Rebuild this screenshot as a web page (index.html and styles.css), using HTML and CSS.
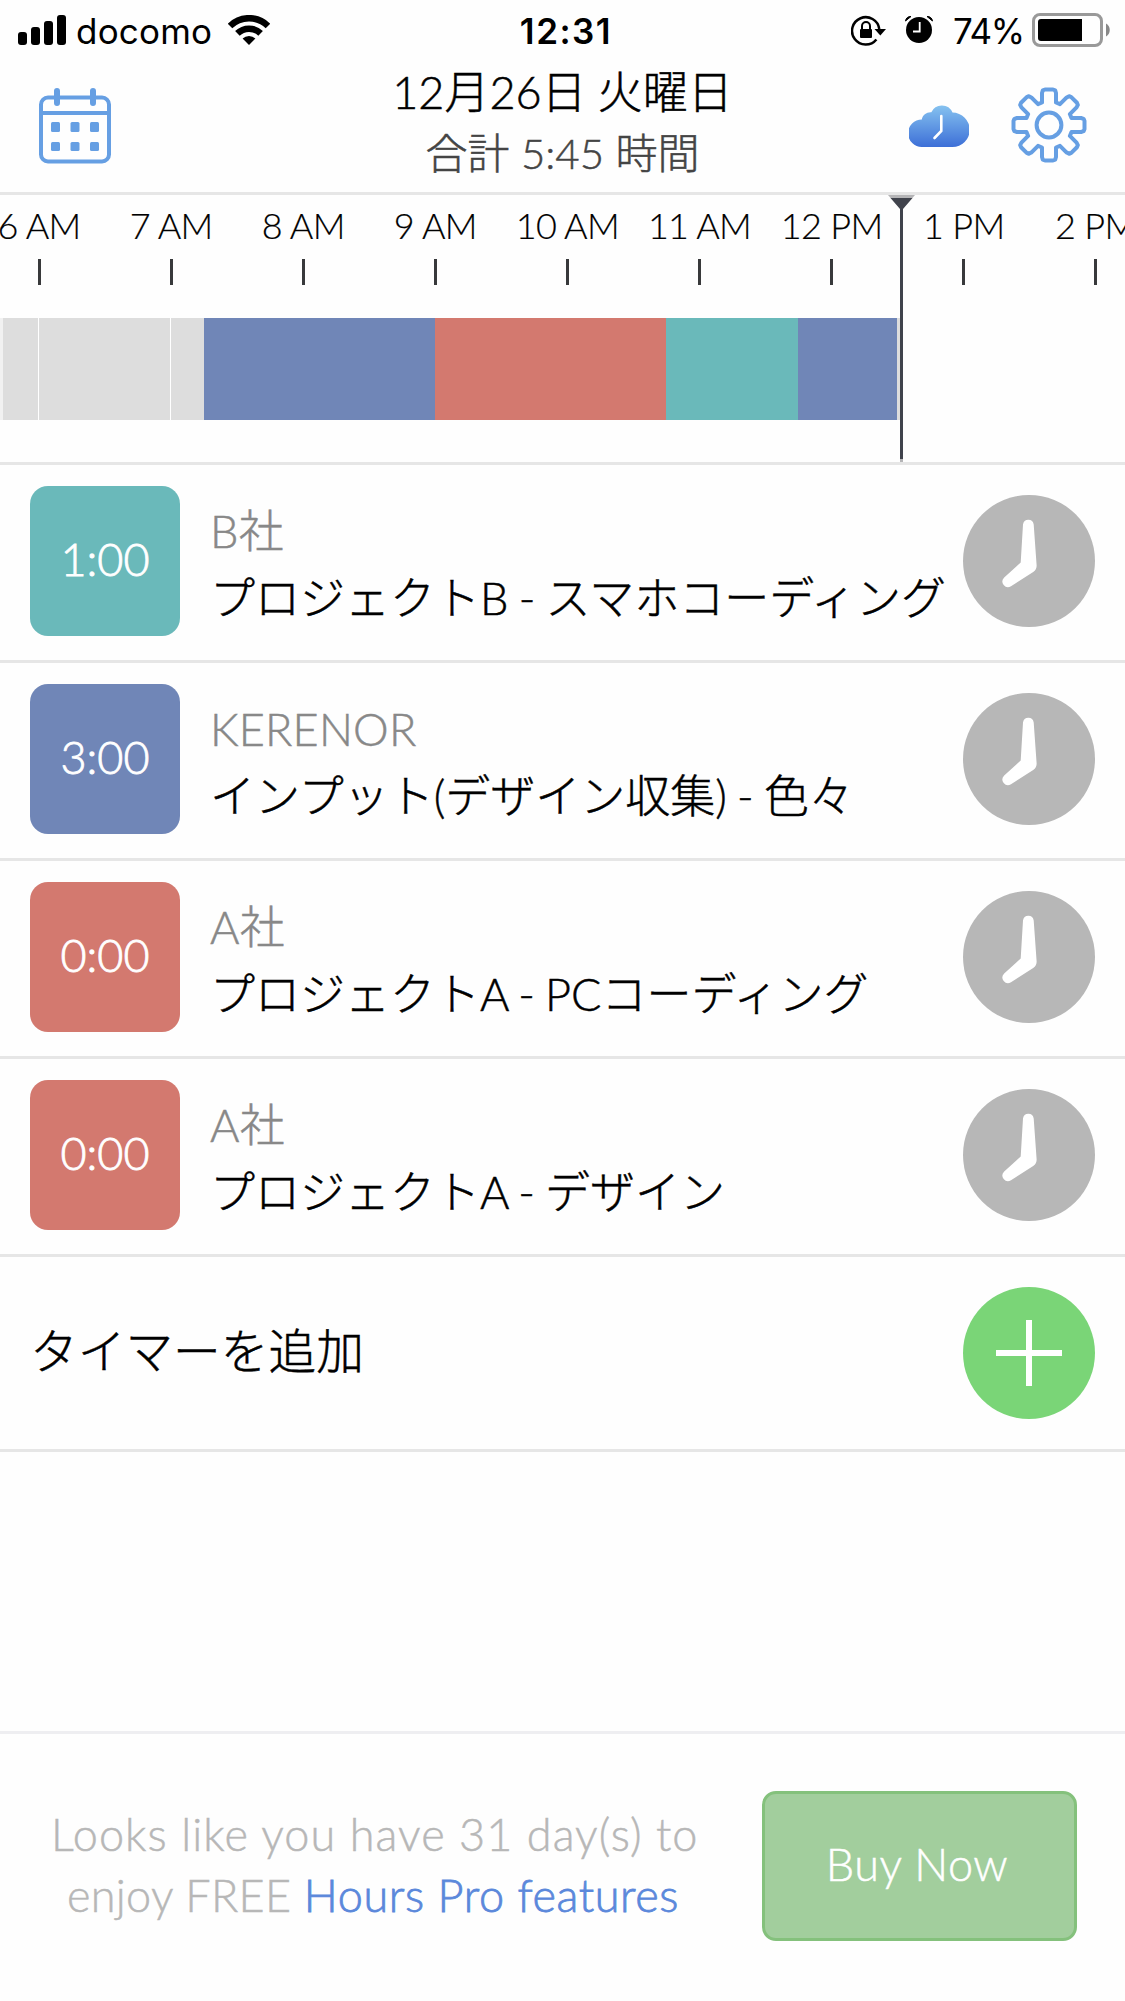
FILE: index.html
```html
<!DOCTYPE html>
<html lang="ja">
<head>
    <meta charset="UTF-8">
    <meta name="viewport" content="width=device-width, initial-scale=1.0">
    <title>Hours</title>
    <link rel="stylesheet" href="styles.css">
</head>
<body>
    <div class="status-bar">
        <div class="status-left">
            <svg class="signal" width="48" height="30" viewBox="0 0 48 30">
                <rect x="0" y="17" width="9" height="13" rx="3"/>
                <rect x="13" y="12" width="9" height="18" rx="3"/>
                <rect x="26" y="6" width="9" height="24" rx="3"/>
                <rect x="39" y="0" width="9" height="30" rx="3"/>
            </svg>
            <span class="carrier">docomo</span>
            <svg class="wifi" width="42" height="30" viewBox="0 0 42 30">
                <path d="M2 11A27 27 0 0 1 40 11" fill="none" stroke="#000" stroke-width="6.5"/>
                <path d="M9.4 18.4A16.5 16.5 0 0 1 32.6 18.4" fill="none" stroke="#000" stroke-width="6.5"/>
                <path d="M21 30L14.6 23.6A9 9 0 0 1 27.4 23.6Z"/>
            </svg>
        </div>
        <span class="clock">12:31</span>
        <div class="status-right">
            <svg class="lock" width="36" height="32" viewBox="0 0 36 32">
                <path d="M28.3 14A13.7 13.7 0 1 0 25.4 24.5" fill="none" stroke="#000" stroke-width="2.5"/>
                <path d="M23.5 14H35L29.3 20.5Z"/>
                <rect x="9" y="14" width="12" height="9" rx="1"/>
                <path d="M11 15V11a4 4 0 0 1 8 0V15" fill="none" stroke="#000" stroke-width="2"/>
            </svg>
            <svg class="alarm" width="28" height="28" viewBox="0 0 28 28">
                <circle cx="14" cy="15" r="13"/>
                <path d="M0.5 6A5 5 0 0 1 6 1.500ZM27.500 6A5 5 0 0 0 22 1.500Z" stroke="#000" stroke-width="1"/>
                <path d="M14.700 7V16.500H8" fill="none" stroke="#fff" stroke-width="1.800"/>
            </svg>
            <span class="percent">74%</span>
            <svg class="battery" width="78" height="34" viewBox="0 0 78 34">
                <rect x="1.500" y="1.500" width="68" height="31" rx="6.500" fill="none" stroke="#999" stroke-width="3"/>
                <path d="M9 6H50V28H9a3 3 0 0 1-3-3V9a3 3 0 0 1 3-3Z"/>
                <path d="M74 10.500C79 13 79 21 74 23.500Z" fill="#888"/>
            </svg>
        </div>
    </div>

    <div class="header">
        <svg class="calendar" width="72" height="76" viewBox="0 0 72 76" fill="none" stroke="#669fe3">
            <rect x="2" y="9.500" width="68" height="64" rx="7" stroke-width="4"/>
            <path d="M2 25H70" stroke-width="4"/>
            <path d="M18 3V15M54 3V15" stroke-width="6" stroke-linecap="round"/>
            <g fill="#669fe3" stroke="none">
                <rect x="12" y="34" width="9" height="10" rx="1.500"/>
                <rect x="31.500" y="34" width="9" height="10" rx="1.500"/>
                <rect x="51" y="34" width="9" height="10" rx="1.500"/>
                <rect x="12" y="54" width="9" height="9" rx="1.500"/>
                <rect x="31.500" y="54" width="9" height="9" rx="1.500"/>
                <rect x="51" y="54" width="9" height="9" rx="1.500"/>
            </g>
        </svg>
        <div class="date">
            <h1>12月26日 火曜日</h1>
            <p>合計 5:45 時間</p>
        </div>
        <div class="tools">
            <svg class="cloud" width="60" height="42" viewBox="0 0 60 42">
                <defs>
                    <linearGradient id="sky" x1="0" y1="0" x2="0" y2="42" gradientUnits="userSpaceOnUse">
                        <stop offset="0" stop-color="#86c3f0"/>
                        <stop offset="1" stop-color="#3d6fd7"/>
                    </linearGradient>
                </defs>
                <path d="M13 42A13.500 13.500 0 0 1 12.800 14.500C13.500 10 18 6.800 22.300 7.300A11.500 11.500 0 0 1 43.500 7.600A17.200 17.200 0 0 1 43.500 42Z" fill="url(#sky)"/>
                <path d="M32.300 11V26L25.500 33" fill="none" stroke="#fff" stroke-width="2.600" stroke-linecap="round"/>
            </svg>
            <svg class="gear" width="76" height="76" viewBox="-38 -38 76 76" fill="none" stroke="#669fe3" stroke-width="4" stroke-linejoin="round">
                <circle r="12.400"/>
                <path id="gearPath"/>
            </svg>
        </div>
    </div>

    <div class="timeline">
        <div class="hours">
            <div class="hour">6 AM</div>
            <div class="hour">7 AM</div>
            <div class="hour">8 AM</div>
            <div class="hour">9 AM</div>
            <div class="hour">10 AM</div>
            <div class="hour">11 AM</div>
            <div class="hour">12 PM</div>
            <div class="hour">1 PM</div>
            <div class="hour">2 PM</div>
        </div>
        <div class="track">
            <div class="block faint" style="width: 3px"></div>
            <div class="block idle" style="width: 36px"></div>
            <div class="block idle" style="width: 132px"></div>
            <div class="block idle last" style="width: 33px"></div>
            <div class="block blue" style="width: 231px"></div>
            <div class="block red" style="width: 231px"></div>
            <div class="block teal" style="width: 132px"></div>
            <div class="block blue" style="width: 99px"></div>
            <div class="block idle last" style="width: 3px"></div>
        </div>
        <svg class="now" width="27" height="267" viewBox="0 0 27 267">
            <path d="M0 0H27L24.500 3H2.500Z" fill="#b5b5b7"/>
            <path d="M2.500 3H24.500L15 14V264H12V14Z" fill="#40434c"/>
            <path d="M12 264H15V267H12Z" fill="#b5b5b7"/>
        </svg>
    </div>

    <div class="timer">
        <div class="time teal">1:00</div>
        <div class="info">
            <div class="client">B社</div>
            <div class="project">プロジェクトB - スマホコーディング</div>
        </div>
        <svg class="start" width="132" height="132" viewBox="0 0 132 132">
            <circle cx="66" cy="66" r="66" fill="#b7b7b7"/>
            <path d="M60 29.500a5.400 5.400 0 0 1 10.700 0L73.600 70q.4 4.500-3.400 7L48 91.300a5.600 5.600 0 0 1-6.800-8.800L57.700 67.500Z" fill="#fff"/>
        </svg>
    </div>
    <div class="timer">
        <div class="time blue">3:00</div>
        <div class="info">
            <div class="client">KERENOR</div>
            <div class="project">インプット(デザイン収集) - 色々</div>
        </div>
        <svg class="start" width="132" height="132" viewBox="0 0 132 132">
            <circle cx="66" cy="66" r="66" fill="#b7b7b7"/>
            <path d="M60 29.500a5.400 5.400 0 0 1 10.700 0L73.600 70q.4 4.500-3.400 7L48 91.300a5.600 5.600 0 0 1-6.800-8.800L57.700 67.500Z" fill="#fff"/>
        </svg>
    </div>
    <div class="timer">
        <div class="time red">0:00</div>
        <div class="info">
            <div class="client">A社</div>
            <div class="project">プロジェクトA - PCコーディング</div>
        </div>
        <svg class="start" width="132" height="132" viewBox="0 0 132 132">
            <circle cx="66" cy="66" r="66" fill="#b7b7b7"/>
            <path d="M60 29.500a5.400 5.400 0 0 1 10.700 0L73.600 70q.4 4.500-3.400 7L48 91.300a5.600 5.600 0 0 1-6.800-8.800L57.700 67.500Z" fill="#fff"/>
        </svg>
    </div>
    <div class="timer">
        <div class="time red">0:00</div>
        <div class="info">
            <div class="client">A社</div>
            <div class="project">プロジェクトA - デザイン</div>
        </div>
        <svg class="start" width="132" height="132" viewBox="0 0 132 132">
            <circle cx="66" cy="66" r="66" fill="#b7b7b7"/>
            <path d="M60 29.500a5.400 5.400 0 0 1 10.700 0L73.600 70q.4 4.500-3.400 7L48 91.300a5.600 5.600 0 0 1-6.800-8.800L57.700 67.500Z" fill="#fff"/>
        </svg>
    </div>
    <div class="timer add">
        <div class="add-label">タイマーを追加</div>
        <svg class="start" width="132" height="132" viewBox="0 0 132 132">
            <circle cx="66" cy="66" r="66" fill="#7ad577"/>
            <path d="M33 66H99M66 33V99" stroke="#fff" stroke-width="6"/>
        </svg>
    </div>

    <div class="footer">
        <p class="promo">Looks like you have 31 day(s) to<br><span class="second">enjoy FREE <a>Hours Pro features</a></span></p>
        <button class="buy">Buy Now</button>
    </div>

    <script>
        // gear outline: one tooth repeated every 45 degrees
        const tooth = [[-7, -22.5], [-7, -32], [-6.2, -34.6], [-4, -35.5], [4, -35.5], [6.2, -34.6], [7, -32], [7, -22.5]];
        const points = [];
        for (let i = 0; i < 8; i++) {
            const a = i * Math.PI / 4;
            tooth.forEach(([x, y]) => {
                points.push((x * Math.cos(a) - y * Math.sin(a)).toFixed(2) + ' ' + (x * Math.sin(a) + y * Math.cos(a)).toFixed(2));
            });
        }
        document.getElementById('gearPath').setAttribute('d', 'M' + points.join('L') + 'Z');
    </script>
</body>
</html>
```
FILE: styles.css
```css
* {
    box-sizing: border-box;
}
body {
    margin: 0;
    width: 1125px;
    height: 2001px;
    display: flex;
    flex-direction: column;
    background-color: #fefefe;
    font-family: Lato, 'Noto Sans CJK JP', sans-serif;
    font-weight: 300;
    color: #000;
    overflow: hidden;
    -webkit-text-stroke: 0.5px;
}
svg {
    display: block;
    flex-shrink: 0;
}
.status-bar {
    display: grid;
    grid-template-columns: 1fr 100px 1fr;
    height: 60px;
    font-family: Inter, sans-serif;
    font-weight: 400;
    font-size: 35px;
    line-height: 62px;
    -webkit-text-stroke: 0;
}
.status-left {
    display: flex;
    padding-left: 18px;
}
.signal, .wifi {
    margin-top: 15px;
}
.carrier {
    width: 162px;
    padding-left: 10px;
    letter-spacing: 0.2px;
}
.clock {
    text-align: center;
    font-weight: 600;
    letter-spacing: 1.5px;
    margin: 0 -4px 0 3px;
}
.status-right {
    display: flex;
    justify-content: flex-end;
    padding-right: 15px;
}
.lock {
    margin: 15px 18px 0 0;
}
.alarm {
    margin: 15px 20px 0 0;
}
.percent {
    width: 79px;
    letter-spacing: -1.3px;
}
.battery {
    margin-top: 13px;
}
.header {
    display: grid;
    grid-template-columns: 300px 1fr 300px;
    height: 135px;
    border-bottom: 3px solid #e6e6e6;
}
.calendar {
    margin: 28px 0 0 39px;
}
.date {
    text-align: center;
}
.date h1 {
    margin: 0;
    font-size: 45px;
    font-weight: 300;
    line-height: 64px;
    word-spacing: -1px;
}
.date p {
    margin: 0;
    font-size: 42px;
    line-height: 58px;
    color: #444;
}
.tools {
    display: flex;
    justify-content: flex-end;
    padding-right: 38px;
}
.cloud {
    margin: 45px 42px 0 0;
}
.gear {
    margin-top: 27px;
}
.timeline {
    position: relative;
    height: 270px;
    border-bottom: 3px solid #e6e6e6;
    overflow: hidden;
}
.hours {
    display: flex;
    height: 123px;
    margin-left: -27px;
}
.hour {
    flex: 0 0 132.1px;
    padding-top: 8px;
    font-size: 36px;
    line-height: 44px;
    text-align: center;
    white-space: nowrap;
    letter-spacing: -0.7px;
    -webkit-text-stroke: 0.2px;
}
.hour::after {
    content: '';
    display: block;
    width: 3px;
    height: 26px;
    margin: 12px auto 0;
    background-color: #38393b;
}
.track {
    display: flex;
    height: 102px;
}
.block.faint {
    background-color: #f1f1f1;
}
.block.idle {
    background-color: #ddd;
    border-right: 1px solid #fff;
}
.block.last {
    border-right: none;
}
.teal {
    background-color: #6ab9ba;
}
.blue {
    background-color: #7086b7;
}
.red {
    background-color: #d3796f;
}
.now {
    position: absolute;
    left: 888px;
    top: 0;
}
.timer {
    display: flex;
    height: 198px;
    padding: 21px 30px 0;
    border-bottom: 3px solid #e6e6e6;
}
.time {
    width: 150px;
    height: 150px;
    border-radius: 18px;
    color: #fff;
    font-size: 45px;
    line-height: 147px;
    text-align: center;
    -webkit-text-stroke: 0.8px;
}
.info {
    flex: 1;
    padding: 12px 0 0 30px;
    font-size: 45px;
    line-height: 67px;
    white-space: nowrap;
}
.project {
    word-spacing: -2px;
}
.client {
    color: #888;
    letter-spacing: 0.2px;
}
.start {
    margin-top: 9px;
}
.add {
    height: 195px;
    justify-content: space-between;
}
.add-label {
    font-size: 47.7px;
    line-height: 146px;
}
.footer {
    display: flex;
    justify-content: space-between;
    margin-top: auto;
    height: 270px;
    padding: 57px 48px 0 51px;
    border-top: 3px solid #eeeef1;
}
.promo {
    margin: 13px 0 0;
    width: 642px;
    font-size: 45px;
    line-height: 61px;
    letter-spacing: 1.1px;
    text-align: center;
    white-space: nowrap;
    color: #b7b7b7;
}
.second {
    margin-left: 2px;
    letter-spacing: 0.3px;
}
.promo a {
    color: #5b88db;
    letter-spacing: 0.6px;
    -webkit-text-stroke: 0.8px;
}
.buy {
    width: 315px;
    height: 150px;
    padding: 0 5px 4px 0;
    border: 3px solid #84c17c;
    border-radius: 14px;
    background-color: #a2ce9d;
    color: #fff;
    font-family: inherit;
    font-size: 45px;
    font-weight: 300;
    letter-spacing: 0.5px;
}
```
